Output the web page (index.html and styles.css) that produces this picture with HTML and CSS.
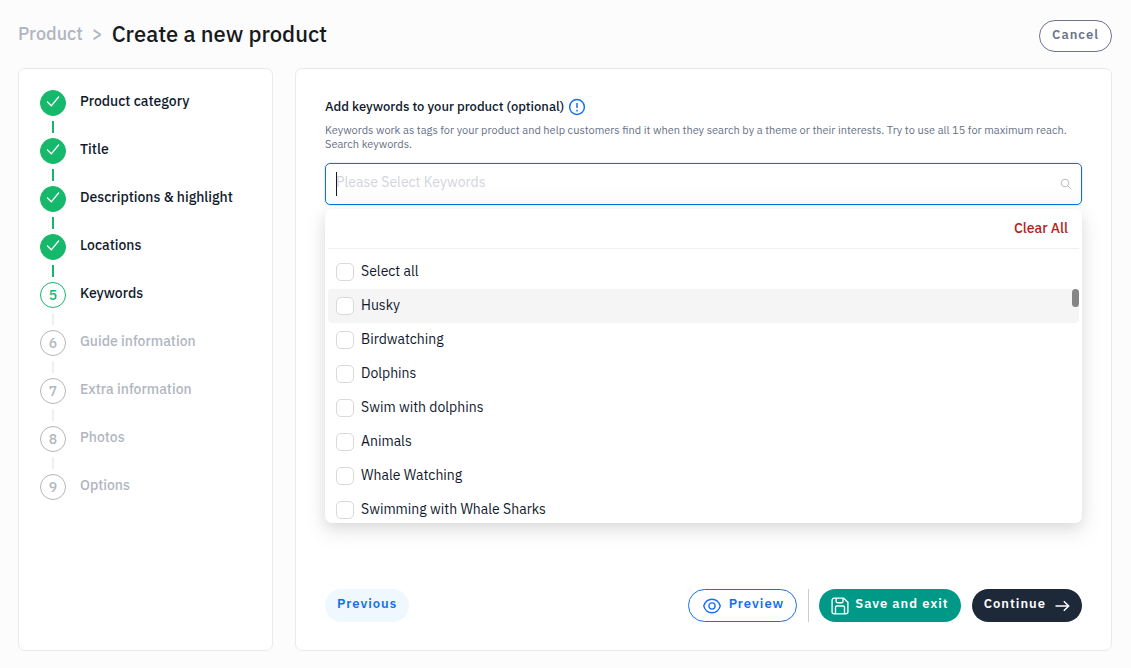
FILE: index.html
```html
<!DOCTYPE html>
<html lang="en">
<head>
<meta charset="utf-8">
<meta name="viewport" content="width=device-width, initial-scale=1">
<title>Create a new product</title>
<link rel="stylesheet" href="styles.css">
</head>
<body>
<header class="topbar">
  <nav class="crumbs" aria-label="Breadcrumb">
    <a class="crumb-link" href="#">Product</a>
    <span class="crumb-sep">&gt;</span>
    <h1 class="crumb-title">Create a new product</h1>
  </nav>
  <button class="btn btn-cancel" type="button"><span class="btn-text">Cancel</span></button>
</header>
<div class="layout">
  <aside class="card sidebar">
    <ol class="steps">
      <li class="step done"><span class="dot"><svg viewBox="0 0 26 26"><path d="M7 11.500L11.300 15.800L19 6.500"/></svg></span><span class="step-label">Product category</span></li>
      <li class="step done"><span class="dot"><svg viewBox="0 0 26 26"><path d="M7 11.500L11.300 15.800L19 6.500"/></svg></span><span class="step-label">Title</span></li>
      <li class="step done"><span class="dot"><svg viewBox="0 0 26 26"><path d="M7 11.500L11.300 15.800L19 6.500"/></svg></span><span class="step-label">Descriptions &amp; highlight</span></li>
      <li class="step done"><span class="dot"><svg viewBox="0 0 26 26"><path d="M7 11.500L11.300 15.800L19 6.500"/></svg></span><span class="step-label">Locations</span></li>
      <li class="step current"><span class="dot">5</span><span class="step-label">Keywords</span></li>
      <li class="step"><span class="dot">6</span><span class="step-label">Guide information</span></li>
      <li class="step"><span class="dot">7</span><span class="step-label">Extra information</span></li>
      <li class="step"><span class="dot">8</span><span class="step-label">Photos</span></li>
      <li class="step"><span class="dot">9</span><span class="step-label">Options</span></li>
    </ol>
  </aside>
  <main class="card content">
    <div class="field">
      <div class="field-head">
        <label class="field-label" for="keywords">Add keywords to your product (optional)</label>
        <svg class="info" viewBox="0 0 18 18" aria-hidden="true"><circle cx="9" cy="9" r="7.400"/><path d="M9 5v5M9 11.800v1.600"/></svg>
      </div>
      <p class="hint">Keywords work as tags for your product and help customers find it when they search by a theme or their interests. Try to use all 15 for maximum reach.<br>Search keywords.</p>
      <div class="select">
        <input class="select-input" id="keywords" type="text" placeholder="Please Select Keywords">
        <span class="caret"></span>
        <svg class="search" viewBox="0 0 12 12" aria-hidden="true"><circle cx="5" cy="5" r="3.800"/><path d="M7.700 7.700L11.300 11.300"/></svg>
        <div class="menu">
          <div class="menu-head"><button class="clear" type="button">Clear All</button></div>
          <div class="options">
            <label class="option"><input class="check" type="checkbox"><span>Select all</span></label>
            <label class="option active"><input class="check" type="checkbox"><span>Husky</span></label>
            <label class="option"><input class="check" type="checkbox"><span>Birdwatching</span></label>
            <label class="option"><input class="check" type="checkbox"><span>Dolphins</span></label>
            <label class="option"><input class="check" type="checkbox"><span>Swim with dolphins</span></label>
            <label class="option"><input class="check" type="checkbox"><span>Animals</span></label>
            <label class="option"><input class="check" type="checkbox"><span>Whale Watching</span></label>
            <label class="option"><input class="check" type="checkbox"><span>Swimming with Whale Sharks</span></label>
            <span class="thumb"></span>
          </div>
        </div>
      </div>
    </div>
    <footer class="actions">
      <button class="btn btn-previous" type="button"><span class="btn-text">Previous</span></button>
      <div class="actions-right">
        <button class="btn btn-preview" type="button"><svg class="icon" viewBox="0 0 20 20"><path d="M.800 10C2.300 5.500 5.800 2.500 10 2.500S17.700 5.500 19.200 10C17.700 14.500 14.200 17.500 10 17.500S2.300 14.500 .800 10z"/><circle cx="10" cy="10" r="3.400"/></svg><span class="btn-text">Preview</span></button>
        <span class="divider"></span>
        <button class="btn btn-save" type="button"><svg class="icon" viewBox="0 0 20 20"><path d="M3.500 1.200H14L18.800 6V16.500a2.300 2.300 0 0 1-2.300 2.300H3.500a2.300 2.300 0 0 1-2.300-2.300V3.500a2.300 2.300 0 0 1 2.300-2.300zM5.700 1.200V5a1.400 1.400 0 0 0 1.400 1.400h4.800a1.400 1.400 0 0 0 1.400-1.400V1.200M5 18.800V11.400a1.400 1.400 0 0 1 1.400-1.400h7.200a1.400 1.400 0 0 1 1.400 1.400v7.400"/></svg><span class="btn-text">Save and exit</span></button>
        <button class="btn btn-continue" type="button"><span class="btn-text">Continue</span><svg class="arrow" viewBox="0 0 15 14"><path d="M.500 7H13.300M8.800 2.200L13.700 7L8.800 11.800"/></svg></button>
      </div>
    </footer>
  </main>
</div>
</body>
</html>
```

FILE: styles.css
```css
* {
  box-sizing: border-box;
}

body {
  margin: 0;
  min-height: 100vh;
  padding: 0 19px 17px 18px;
  display: flex;
  flex-direction: column;
  background: #fcfcfc;
  color: #111a2d;
  font-family: "IBM Plex Sans", Roboto, sans-serif;
  font-size: 14px;
  line-height: 20px;
}

button,
input {
  font: inherit;
}

svg {
  fill: none;
  stroke: currentColor;
  flex: none;
}

.topbar {
  height: 68px;
  display: flex;
  justify-content: space-between;
  align-items: center;
}

.crumbs {
  display: flex;
  align-items: center;
  gap: 9px;
  font-weight: 500;
}

.crumb-link,
.crumb-sep {
  color: #b1b6c0;
  font-size: 18px;
  text-decoration: none;
}

.crumb-title {
  margin: 0;
  color: #17191c;
  font-size: 22px;
  font-weight: 500;
}

.btn {
  height: 33px;
  padding: 0 11px;
  display: flex;
  align-items: center;
  border: 1px solid transparent;
  border-radius: 17px;
  font-size: 13px;
  font-weight: 600;
  letter-spacing: 1px;
  white-space: nowrap;
  cursor: pointer;
}

.btn-text {
  padding-bottom: 3px;
}

.btn-cancel {
  height: 32px;
  padding: 0 12px;
  margin-top: 4px;
  background: #fff;
  border-color: #6b7489;
  color: #6b7489;
}

.layout {
  flex: 1;
  display: grid;
  grid-template-columns: 255px 1fr;
  gap: 22px;
}

.card {
  background: #fff;
  border: 1px solid #e9eaef;
  border-radius: 7px;
}

.sidebar {
  padding: 21px;
}

.steps {
  list-style: none;
  margin: 0;
  padding: 0;
  display: flex;
  flex-direction: column;
  gap: 22px;
}

.step {
  position: relative;
  display: flex;
  gap: 14px;
  color: #b1b6c0;
  font-weight: 500;
}

.step:not(:last-child)::after {
  content: "";
  position: absolute;
  left: 12px;
  top: 31px;
  width: 2px;
  height: 12px;
  background: #f0f0f2;
}

.step.done:not(:last-child)::after {
  background: #16b86c;
}

.dot {
  width: 26px;
  height: 26px;
  display: flex;
  align-items: center;
  justify-content: center;
  border: 1px solid #b1b6c0;
  border-radius: 50%;
}

.dot svg {
  width: 26px;
  height: 26px;
  stroke: #fff;
  stroke-width: 1.3;
}

.step-label {
  padding-top: 1px;
}

.step.done,
.step.current {
  color: #111a2d;
}

.done .dot {
  background: #16b86c;
  border-color: #16b86c;
}

.current .dot {
  color: #16b86c;
  border-color: #16b86c;
}

.content {
  padding: 28px 29px;
  display: flex;
  flex-direction: column;
  justify-content: space-between;
}

.field-head {
  display: flex;
  align-items: center;
  gap: 4px;
}

.field-label {
  font-size: 13px;
  font-weight: 500;
}

.info {
  width: 18px;
  height: 18px;
  color: #1570ef;
  stroke-width: 1.5;
}

.hint {
  margin: 6px 0 12px;
  color: #667085;
  font-size: 11px;
  line-height: 14px;
}

.select {
  position: relative;
}

.select-input {
  display: block;
  width: 100%;
  height: 42px;
  padding: 0 40px 4px 10px;
  background: linear-gradient(#fff 50%, #fbfbfb);
  border: 1px solid #0b6fe8;
  border-radius: 5px;
  box-shadow: 0 0 0 1px #e6f1fd;
  color: #111a2d;
  outline: none;
}

.select-input::placeholder {
  color: #d2d5dc;
  opacity: 1;
}

.caret {
  position: absolute;
  left: 11px;
  top: 9px;
  width: 1px;
  height: 24px;
  background: #111a2d;
}

.search {
  position: absolute;
  right: 10px;
  top: 15px;
  width: 12px;
  height: 12px;
  color: #bdbdbd;
}

.menu {
  position: absolute;
  top: 46px;
  left: 0;
  right: 0;
  padding: 3px;
  background: #fff;
  border-radius: 7px;
  box-shadow: 0 5px 14px rgba(0, 0, 0, 0.1), 0 8px 24px 4px rgba(0, 0, 0, 0.05);
}

.menu-head {
  height: 37px;
  padding: 0 11px 4px;
  display: flex;
  align-items: center;
  justify-content: flex-end;
  border-bottom: 1px solid #f0f0f2;
}

.clear {
  padding: 0;
  background: none;
  border: 0;
  color: #b32318;
  font-weight: 500;
  cursor: pointer;
}

.options {
  position: relative;
  height: 271px;
  padding-top: 6px;
  overflow: hidden;
}

.option {
  height: 34px;
  padding: 0 8px;
  display: flex;
  align-items: flex-start;
  gap: 7px;
  border-radius: 4px;
  line-height: 32px;
}

.option.active {
  background: #f5f5f5;
}

.check {
  appearance: none;
  width: 18px;
  height: 18px;
  margin: 8px 0 0;
  background: #fff;
  border: 1px solid #d9d9d9;
  border-radius: 5px;
}

.thumb {
  position: absolute;
  top: 40px;
  right: 0;
  width: 7px;
  height: 18px;
  background: #858585;
  border-radius: 4px;
}

.actions,
.actions-right {
  display: flex;
  align-items: center;
}

.actions {
  justify-content: space-between;
}

.actions-right {
  gap: 11px;
}

.btn-previous {
  background: #eff8ff;
  color: #1570ef;
}

.btn-preview {
  padding: 0 12px 0 14px;
  gap: 8px;
  background: #fff;
  border-color: #1570ef;
  color: #1570ef;
}

.icon {
  width: 18px;
  height: 18px;
  stroke-width: 1.5;
}

.divider {
  width: 1px;
  height: 33px;
  margin-right: -1px;
  background: #c9ccd3;
}

.btn-save {
  gap: 6px;
  background: #009987;
  color: #fff;
}

.btn-continue {
  gap: 9px;
  background: #1d2939;
  color: #fff;
}

.arrow {
  width: 15px;
  height: 14px;
  stroke-width: 1.5;
}
```
